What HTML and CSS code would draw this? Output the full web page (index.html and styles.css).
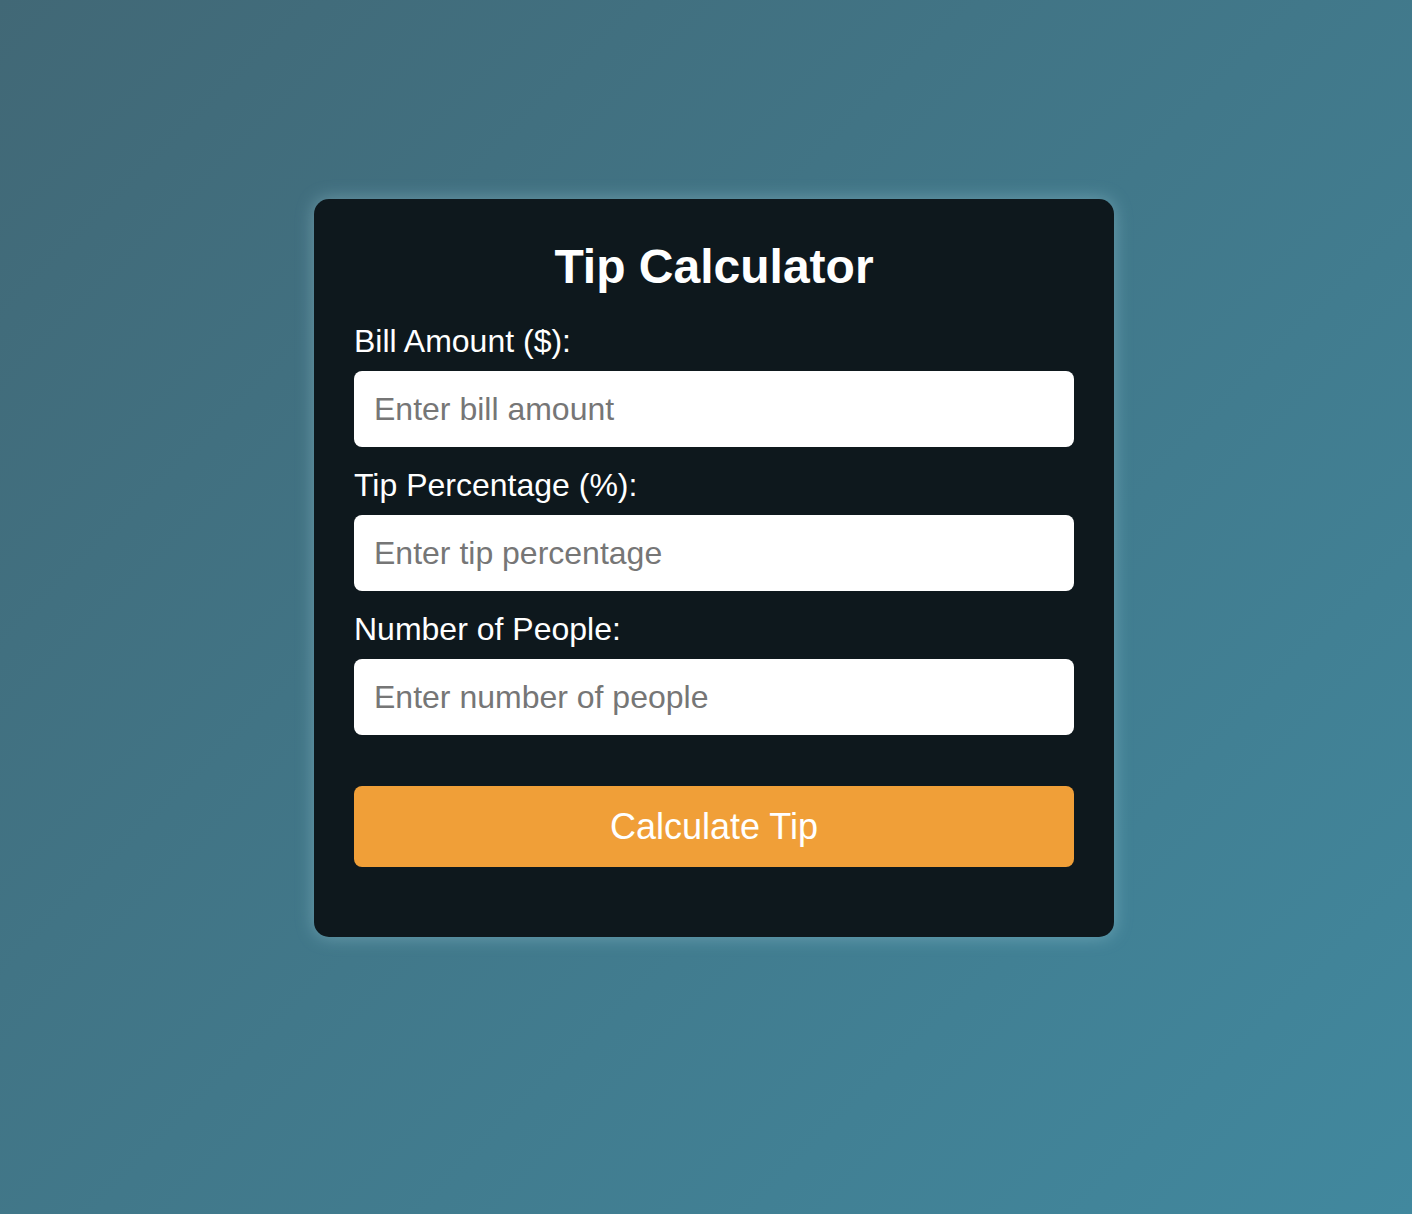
FILE: index.html
```html
<!DOCTYPE html>
<html lang="en">
<head>
<meta charset="utf-8">
<title>Tip Calculator</title>
<link rel="stylesheet" href="styles.css">
</head>
<body>
  <main class="page">
    <section class="card">
      <h1 class="title">Tip Calculator</h1>
      <div class="field">
        <label class="label" for="bill">Bill Amount ($):</label>
        <input class="input" id="bill" type="number" placeholder="Enter bill amount">
      </div>
      <div class="field">
        <label class="label" for="tip">Tip Percentage (%):</label>
        <input class="input" id="tip" type="number" placeholder="Enter tip percentage">
      </div>
      <div class="field">
        <label class="label" for="people">Number of People:</label>
        <input class="input" id="people" type="number" placeholder="Enter number of people">
      </div>
      <button class="button" type="button">Calculate Tip</button>
    </section>
  </main>
</body>
</html>
```

FILE: styles.css
```css
html, body {
  margin: 0;
  padding: 0;
  height: 100%;
}

body {
  font-family: "Liberation Sans", Arial, sans-serif;
  background: linear-gradient(135deg, #416876 0%, #41889e 100%);
  color: #ffffff;
}

.page {
  min-height: 100%;
  display: flex;
  justify-content: center;
  padding: 199px 0 0 16px;
  box-sizing: border-box;
}

.card {
  width: 800px;
  box-sizing: border-box;
  padding: 40px 40px 70px;
  background: #0e181d;
  border-radius: 15px;
  box-shadow: 0 0 18px rgba(190, 235, 245, 0.35);
  display: flex;
  flex-direction: column;
  align-self: flex-start;
}

.title {
  margin: 0 0 30px;
  font-size: 48px;
  line-height: 55px;
  font-weight: 700;
  text-align: center;
}

.field {
  display: flex;
  flex-direction: column;
  margin-bottom: 21px;
}

.label {
  font-size: 32px;
  line-height: 34px;
  margin-bottom: 13px;
}

.input {
  height: 76px;
  box-sizing: border-box;
  border: none;
  border-radius: 8px;
  background: #ffffff;
  padding: 0 20px;
  font-family: "Liberation Sans", Arial, sans-serif;
  font-size: 32px;
  color: #222;
  outline: none;
}

.input::placeholder {
  color: #767676;
}

.button {
  margin-top: 30px;
  height: 81px;
  border: none;
  border-radius: 8px;
  background: #f09f38;
  color: #ffffff;
  font-family: "Liberation Sans", Arial, sans-serif;
  font-size: 36px;
  cursor: pointer;
}
```
